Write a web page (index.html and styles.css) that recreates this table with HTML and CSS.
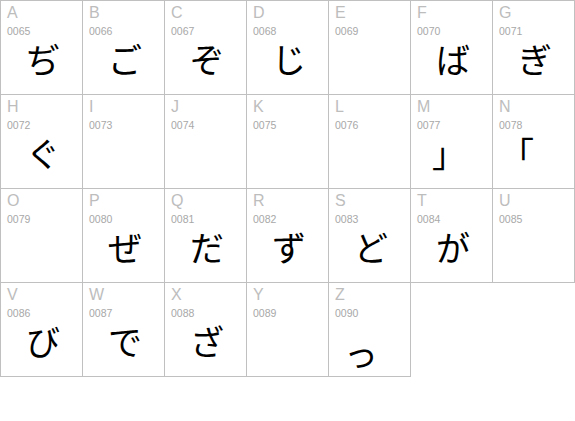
FILE: index.html
```html
<!DOCTYPE html>
<html lang="ja">
<head>
<meta charset="utf-8">
<title>Character map</title>
<link rel="stylesheet" href="styles.css">
</head>
<body>
<div class="grid">
  <div class="cell"><div class="key">A</div><div class="code">0065</div><div class="glyph">ぢ</div></div>
  <div class="cell"><div class="key">B</div><div class="code">0066</div><div class="glyph">ご</div></div>
  <div class="cell"><div class="key">C</div><div class="code">0067</div><div class="glyph">ぞ</div></div>
  <div class="cell"><div class="key">D</div><div class="code">0068</div><div class="glyph">じ</div></div>
  <div class="cell"><div class="key">E</div><div class="code">0069</div><div class="glyph"></div></div>
  <div class="cell"><div class="key">F</div><div class="code">0070</div><div class="glyph">ば</div></div>
  <div class="cell"><div class="key">G</div><div class="code">0071</div><div class="glyph">ぎ</div></div>
  <div class="cell"><div class="key">H</div><div class="code">0072</div><div class="glyph">ぐ</div></div>
  <div class="cell"><div class="key">I</div><div class="code">0073</div><div class="glyph"></div></div>
  <div class="cell"><div class="key">J</div><div class="code">0074</div><div class="glyph"></div></div>
  <div class="cell"><div class="key">K</div><div class="code">0075</div><div class="glyph"></div></div>
  <div class="cell"><div class="key">L</div><div class="code">0076</div><div class="glyph"></div></div>
  <div class="cell"><div class="key">M</div><div class="code">0077</div><div class="glyph glyph-close">」</div></div>
  <div class="cell"><div class="key">N</div><div class="code">0078</div><div class="glyph glyph-open">「</div></div>
  <div class="cell"><div class="key">O</div><div class="code">0079</div><div class="glyph"></div></div>
  <div class="cell"><div class="key">P</div><div class="code">0080</div><div class="glyph">ぜ</div></div>
  <div class="cell"><div class="key">Q</div><div class="code">0081</div><div class="glyph">だ</div></div>
  <div class="cell"><div class="key">R</div><div class="code">0082</div><div class="glyph">ず</div></div>
  <div class="cell"><div class="key">S</div><div class="code">0083</div><div class="glyph">ど</div></div>
  <div class="cell"><div class="key">T</div><div class="code">0084</div><div class="glyph">が</div></div>
  <div class="cell"><div class="key">U</div><div class="code">0085</div><div class="glyph"></div></div>
  <div class="cell"><div class="key">V</div><div class="code">0086</div><div class="glyph">び</div></div>
  <div class="cell"><div class="key">W</div><div class="code">0087</div><div class="glyph">で</div></div>
  <div class="cell"><div class="key">X</div><div class="code">0088</div><div class="glyph">ざ</div></div>
  <div class="cell"><div class="key">Y</div><div class="code">0089</div><div class="glyph"></div></div>
  <div class="cell"><div class="key">Z</div><div class="code">0090</div><div class="glyph glyph-small">っ</div></div>
</div>
</body>
</html>
```

FILE: styles.css
```css
html, body {
  margin: 0;
  padding: 0;
  background: #ffffff;
}

.grid {
  display: grid;
  grid-template-columns: repeat(7, 82px);
  grid-auto-rows: 94px;
  padding-bottom: 1px;
}

.cell {
  box-sizing: border-box;
  width: 83px;
  height: 95px;
  border: 1px solid #c0c0c0;
  padding: 3px 0 0 6px;
  font-family: "Liberation Sans", Arial, sans-serif;
}

.key {
  font-size: 16px;
  line-height: 18px;
  color: #bdbdbd;
}

.code {
  margin-top: 3px;
  font-size: 10.5px;
  line-height: 12px;
  color: #a8a8a8;
}

.glyph {
  margin: 4px 0 0 -3px;
  height: 36px;
  font-family: "Noto Sans CJK JP", sans-serif;
  font-size: 34px;
  line-height: 36px;
  text-align: center;
  color: #000000;
}

.glyph-close {
  text-indent: -8px;
}

.glyph-open {
  text-indent: -36px;
}

.glyph-small {
  text-indent: -20px;
  padding-top: 12px;
}
```
